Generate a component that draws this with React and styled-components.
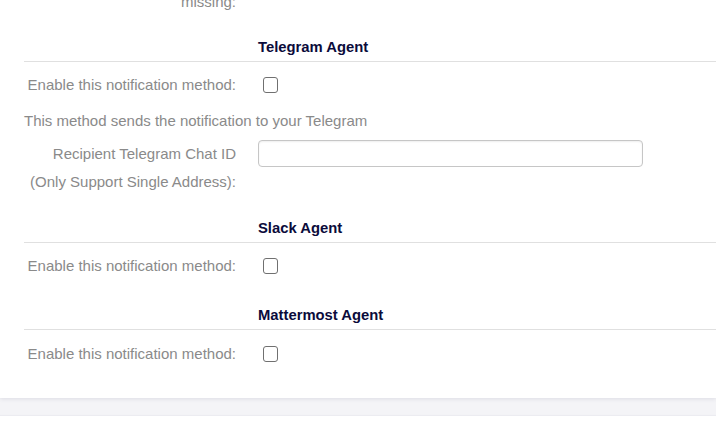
import React from "react";
import styled, { createGlobalStyle } from "styled-components";

const Global = createGlobalStyle`
  html, body { margin: 0; padding: 0; background: #ffffff; overflow: hidden; }
  body { font-family: "Liberation Sans", Arial, sans-serif; }
`;

const Page = styled.div`
  width: 716px;
  height: 431px;
  overflow: hidden;
  display: flex;
  flex-direction: column;
  background: #f4f4f7;
`;

const Card = styled.div`
  background: #ffffff;
  margin-top: -8px;
  padding: 0 0 34px 24px;
  box-shadow: 0 1px 4px rgba(60, 60, 100, 0.12);
  display: flex;
  flex-direction: column;
`;

const NextCard = styled.div`
  background: #ffffff;
  margin-top: 18px;
  flex: 1;
  box-shadow: 0 -1px 1px rgba(60, 60, 100, 0.04);
`;

const Row = styled.div`
  display: grid;
  grid-template-columns: 212px 1fr;
  column-gap: 22px;
  align-items: ${(p) => (p.$top ? "start" : "center")};
  margin-top: ${(p) => p.$mt || 0}px;
`;

const Label = styled.div`
  text-align: right;
  color: #8a8a8a;
  font-size: 15px;
  line-height: ${(p) => p.$lh || 20}px;
  white-space: nowrap;
`;

const Note = styled.div`
  color: #8a8a8a;
  font-size: 15px;
  line-height: 20px;
  white-space: nowrap;
  margin-top: ${(p) => p.$mt || 0}px;
`;

const SectionHead = styled.div`
  display: grid;
  grid-template-columns: 212px 1fr;
  column-gap: 22px;
  border-bottom: 1px solid #e0e0e0;
  padding-bottom: 4px;
  margin-top: ${(p) => p.$mt || 0}px;
`;

const Title = styled.h4`
  grid-column: 2;
  margin: 0;
  color: #0b0b3b;
  font-size: 14.8px;
  font-weight: bold;
  line-height: 20px;
`;

const Check = styled.input.attrs({ type: "checkbox" })`
  appearance: none;
  -webkit-appearance: none;
  margin: 0 0 0 5px;
  width: 15px;
  height: 16px;
  border: 1.5px solid #707070;
  border-radius: 3px;
  background: #fff;
  box-sizing: border-box;
  display: block;
`;

const TextInput = styled.input.attrs({ type: "text" })`
  width: 385px;
  height: 27px;
  box-sizing: border-box;
  border: 1px solid #c6c6c6;
  border-radius: 4px;
  box-shadow: inset 0 1px 2px rgba(0, 0, 0, 0.07);
  background: #fff;
  margin: 0;
  padding: 0 8px;
  font-family: inherit;
  font-size: 14px;
`;

function EnableRow({ mt }) {
  return (
    <Row $mt={mt}>
      <Label>Enable this notification method:</Label>
      <div>
        <Check />
      </div>
    </Row>
  );
}

export default function App() {
  return (
    <>
      <Global />
      <Page>
        <Card>
          <Row>
            <Label>missing:</Label>
            <div />
          </Row>

          <SectionHead $mt={25}>
            <Title>Telegram Agent</Title>
          </SectionHead>
          <EnableRow mt={13} />
          <Note $mt={16}>This method sends the notification to your Telegram</Note>
          <Row $mt={9} $top>
            <Label $lh={28}>
              Recipient Telegram Chat ID
              <br />
              (Only Support Single Address):
            </Label>
            <div>
              <TextInput />
            </div>
          </Row>

          <SectionHead $mt={22}>
            <Title>Slack Agent</Title>
          </SectionHead>
          <EnableRow mt={13} />

          <SectionHead $mt={29}>
            <Title>Mattermost Agent</Title>
          </SectionHead>
          <EnableRow mt={14} />
        </Card>
        <NextCard />
      </Page>
    </>
  );
}
